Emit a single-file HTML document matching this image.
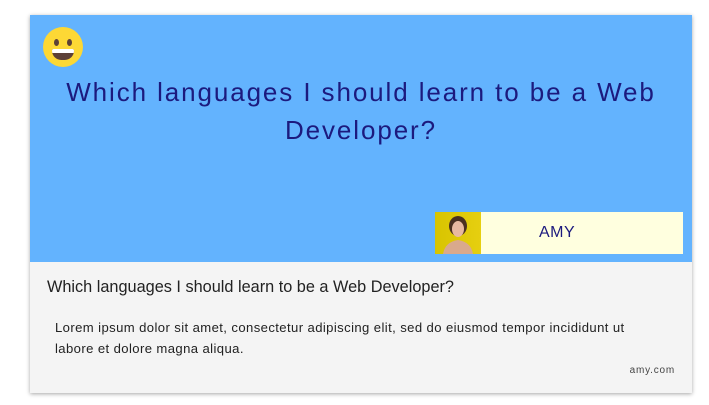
<!DOCTYPE html>
<html><head><style>
body{margin:0;width:709px;height:405px;background:#fff;font-family:"Liberation Sans",sans-serif;position:relative;overflow:hidden}
.card{position:absolute;left:30px;top:15px;width:662px;height:378px;background:#f4f4f4;box-shadow:0 1px 4px rgba(0,0,0,.35)}
.top{position:absolute;left:0;top:0;width:662px;height:247px;background:#63b3fe}
.emoji{position:absolute;left:13px;top:12px;width:40px;height:40px;border-radius:50%;background:#fdd835}
.eye{position:absolute;top:12px;width:5px;height:7px;border-radius:50%;background:#5d4037}
.mouth{position:absolute;left:9px;top:22px;width:22px;height:11px;background:#5d4037;border-radius:2px 2px 11px 11px;overflow:hidden}
.mouth i{position:absolute;left:0;top:0;width:22px;height:4px;background:#fff}
h1{position:absolute;left:0;top:58px;width:662px;margin:0;text-align:center;font-weight:normal;font-size:26px;line-height:38px;letter-spacing:1.9px;color:#1c1a7e}
.av{position:absolute;left:405px;top:197px;width:46px;height:42px;background:linear-gradient(90deg,#d8c400,#e6cf10)}
.name{position:absolute;left:451px;top:197px;width:202px;height:42px;background:#ffffdf;color:#1c1a7e;font-size:16px;line-height:42px;text-indent:58px;letter-spacing:.5px}
h2{position:absolute;left:17px;top:263px;margin:0;font-weight:normal;font-size:16.3px;color:#222}
p{position:absolute;left:25px;top:302px;margin:0;width:620px;white-space:nowrap;font-size:13.1px;letter-spacing:.4px;line-height:21px;color:#222}
.u{position:absolute;right:17px;top:350px;font-size:10px;letter-spacing:.8px;color:#444}
</style></head><body>
<div class="card">
<div class="top">
<div class="emoji"><div class="eye" style="left:11px"></div><div class="eye" style="left:24px"></div><div class="mouth"><i></i></div></div>
<h1>Which languages I should learn to be a Web<br>Developer?</h1>
<div class="av"><svg width="46" height="42"><ellipse cx="23" cy="14" rx="9" ry="10" fill="#4a3020"/><ellipse cx="23" cy="17" rx="6" ry="8" fill="#e8b9a0"/><path d="M8 42 Q10 30 23 28 Q36 30 38 42Z" fill="#d9a98c"/></svg></div>
<div class="name">AMY</div>
</div>
<h2>Which languages I should learn to be a Web Developer?</h2>
<p>Lorem ipsum dolor sit amet, consectetur adipiscing elit, sed do eiusmod tempor incididunt ut<br>labore et dolore magna aliqua.</p>
<div class="u">amy.com</div>
</div>
</body></html>
